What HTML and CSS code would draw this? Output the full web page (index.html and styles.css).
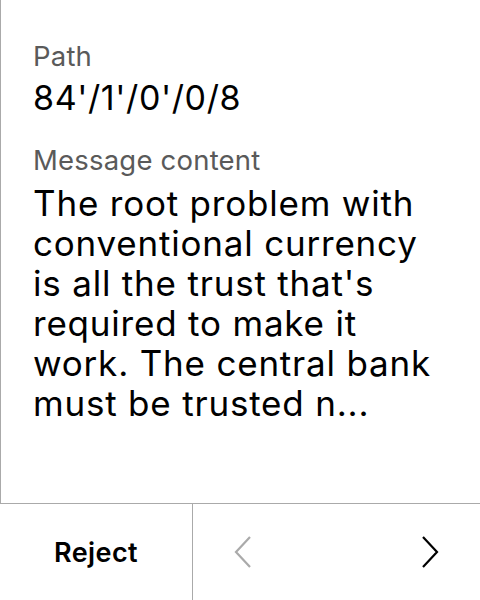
FILE: index.html
```html
<!DOCTYPE html>
<html>
<head>
<meta charset="utf-8">
<link rel="stylesheet" href="styles.css">
</head>
<body>
<div class="screen">
  <div class="content">
    <div class="label">Path</div>
    <div class="value">84'/1'/0'/0/8</div>
    <div class="label label-msg">Message content</div>
    <div class="message">The root problem with conventional currency is all the trust that's required to make it work. The central bank must be trusted n...</div>
  </div>
  <div class="footer">
    <div class="reject">Reject</div>
    <div class="nav">
      <svg class="chev" width="18" height="32" viewBox="0 0 18 32"><path d="M16 1 L2 16 L16 31" fill="none" stroke="#aaaaaa" stroke-width="2.2"/></svg>
      <svg class="chev" width="18" height="32" viewBox="0 0 18 32"><path d="M2 1 L16 16 L2 31" fill="none" stroke="#000000" stroke-width="2.2"/></svg>
    </div>
  </div>
</div>
</body>
</html>
```
FILE: styles.css
```css
html, body {
  margin: 0;
  padding: 0;
  background: #ffffff;
}
body {
  font-family: Inter, "Noto Sans", sans-serif;
  color: #000;
}
.screen {
  width: 480px;
  height: 600px;
  display: flex;
  flex-direction: column;
}
.content {
  height: 504px;
  box-sizing: border-box;
  border-left: 1px solid #aaaaaa;
  border-bottom: 1px solid #aaaaaa;
  padding: 40px 30px 0 32px;
}
.label {
  font-size: 27.5px;
  line-height: 32px;
  letter-spacing: 0.2px;
  color: #5a5a5a;
}
.value {
  font-size: 34px;
  line-height: 40px;
  letter-spacing: 0.6px;
  margin-top: 6px;
}
.label-msg {
  margin-top: 26px;
}
.message {
  font-size: 35px;
  line-height: 40px;
  letter-spacing: 0.8px;
  margin-top: 7px;
}
.footer {
  flex: 1;
  display: flex;
}
.reject {
  width: 192px;
  border-right: 1px solid #aaaaaa;
  display: flex;
  align-items: center;
  justify-content: center;
  font-size: 27px;
  font-weight: 600;
  letter-spacing: 0.4px;
}
.nav {
  flex: 1;
  display: flex;
  align-items: center;
  justify-content: space-between;
  padding: 0 41px 0 41px;
}
```
